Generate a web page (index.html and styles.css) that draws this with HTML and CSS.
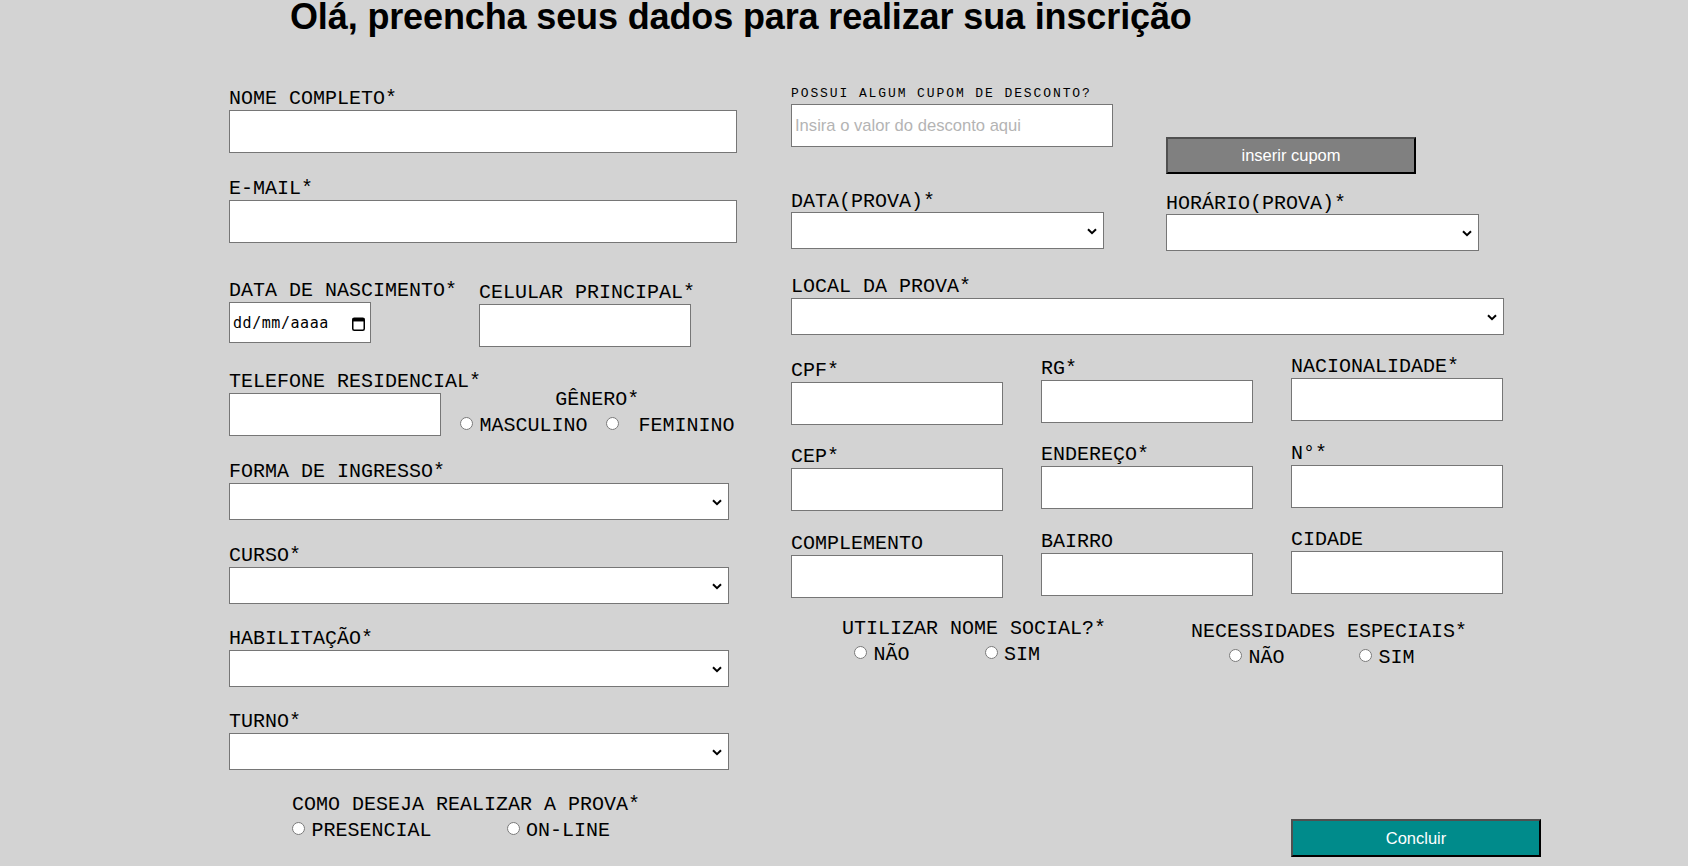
FILE: index.html
```html
<!DOCTYPE html>
<html lang="pt-BR">
<head>
<meta charset="utf-8">
<title>Inscrição</title>
<link rel="stylesheet" href="styles.css">
</head>
<body>
<h1 class="title">Olá, preencha seus dados para realizar sua inscrição</h1>
<form class="form">
  <div class="col-left">
    <div class="field">
      <label class="lbl">NOME COMPLETO*</label>
      <input class="txt w508" type="text">
    </div>
    <div class="field mt26">
      <label class="lbl">E-MAIL*</label>
      <input class="txt w508" type="text">
    </div>
    <div class="row r-birth">
      <div class="field">
        <label class="lbl">DATA DE NASCIMENTO*</label>
        <div class="date-box">
          <span class="date-text">dd/mm/aaaa</span>
          <svg class="cal" width="13" height="14" viewBox="0 0 13 14"><rect x="0.75" y="1.25" width="11.5" height="12" rx="1.5" fill="none" stroke="#000" stroke-width="1.5"/><rect x="0.75" y="1.25" width="11.5" height="3.2" fill="#000"/></svg>
        </div>
      </div>
      <div class="field mt2">
        <label class="lbl">CELULAR PRINCIPAL*</label>
        <input class="txt w212" type="text">
      </div>
    </div>
    <div class="row r-tel">
      <div class="field w212">
        <label class="lbl">TELEFONE RESIDENCIAL*</label>
        <input class="txt w212" type="text">
      </div>
      <div class="group g-genero">
        <span class="grp-lbl">GÊNERO*</span>
        <div class="options">
          <label class="opt"><input type="radio" name="genero">MASCULINO</label>
          <label class="opt o-fem"><input type="radio" name="genero"><span class="pad">FEMININO</span></label>
        </div>
      </div>
    </div>
    <div class="field mt26">
      <label class="lbl">FORMA DE INGRESSO*</label>
      <span class="sel-wrap"><select class="sel w500"><option></option></select><svg class="chev" width="10" height="7" viewBox="0 0 10 7"><path d="M1 1.2 L5 5.2 L9 1.2" fill="none" stroke="#000" stroke-width="2"/></svg></span>
    </div>
    <div class="field mt26">
      <label class="lbl">CURSO*</label>
      <span class="sel-wrap"><select class="sel w500"><option></option></select><svg class="chev" width="10" height="7" viewBox="0 0 10 7"><path d="M1 1.2 L5 5.2 L9 1.2" fill="none" stroke="#000" stroke-width="2"/></svg></span>
    </div>
    <div class="field mt25">
      <label class="lbl">HABILITAÇÃO*</label>
      <span class="sel-wrap"><select class="sel w500"><option></option></select><svg class="chev" width="10" height="7" viewBox="0 0 10 7"><path d="M1 1.2 L5 5.2 L9 1.2" fill="none" stroke="#000" stroke-width="2"/></svg></span>
    </div>
    <div class="field mt25">
      <label class="lbl">TURNO*</label>
      <span class="sel-wrap"><select class="sel w500"><option></option></select><svg class="chev" width="10" height="7" viewBox="0 0 10 7"><path d="M1 1.2 L5 5.2 L9 1.2" fill="none" stroke="#000" stroke-width="2"/></svg></span>
    </div>
    <div class="group g-como">
      <span class="grp-lbl">COMO DESEJA REALIZAR A PROVA*</span>
      <div class="options">
        <label class="opt"><input type="radio" name="modo">PRESENCIAL</label>
        <label class="opt o-online"><input type="radio" name="modo">ON-LINE</label>
      </div>
    </div>
  </div>

  <div class="col-right">
    <div class="row r-coupon">
      <div class="field">
        <label class="lbl-small">POSSUI ALGUM CUPOM DE DESCONTO?</label>
        <input class="txt w322" type="text" placeholder="Insira o valor do desconto aqui">
      </div>
      <button type="button" class="btn btn-cupom">inserir cupom</button>
    </div>
    <div class="row r-prova">
      <div class="field">
        <label class="lbl tight">DATA(PROVA)*</label>
        <span class="sel-wrap"><select class="sel w313"><option></option></select><svg class="chev" width="10" height="7" viewBox="0 0 10 7"><path d="M1 1.2 L5 5.2 L9 1.2" fill="none" stroke="#000" stroke-width="2"/></svg></span>
      </div>
      <div class="field f-hora">
        <label class="lbl tight">HORÁRIO(PROVA)*</label>
        <span class="sel-wrap"><select class="sel w313"><option></option></select><svg class="chev" width="10" height="7" viewBox="0 0 10 7"><path d="M1 1.2 L5 5.2 L9 1.2" fill="none" stroke="#000" stroke-width="2"/></svg></span>
      </div>
    </div>
    <div class="field f-local">
      <label class="lbl">LOCAL DA PROVA*</label>
      <span class="sel-wrap"><select class="sel w713"><option></option></select><svg class="chev" width="10" height="7" viewBox="0 0 10 7"><path d="M1 1.2 L5 5.2 L9 1.2" fill="none" stroke="#000" stroke-width="2"/></svg></span>
    </div>
    <div class="row trio r-a">
      <div class="field w212 mt4">
        <label class="lbl">CPF*</label>
        <input class="txt w212" type="text">
      </div>
      <div class="field w212 mt2">
        <label class="lbl">RG*</label>
        <input class="txt w212" type="text">
      </div>
      <div class="field w212">
        <label class="lbl">NACIONALIDADE*</label>
        <input class="txt w212" type="text">
      </div>
    </div>
    <div class="row trio r-b">
      <div class="field w212 mt3">
        <label class="lbl">CEP*</label>
        <input class="txt w212" type="text">
      </div>
      <div class="field w212 mt1">
        <label class="lbl">ENDEREÇO*</label>
        <input class="txt w212" type="text">
      </div>
      <div class="field w212">
        <label class="lbl">N°*</label>
        <input class="txt w212" type="text">
      </div>
    </div>
    <div class="row trio r-c">
      <div class="field w212 mt4">
        <label class="lbl">COMPLEMENTO</label>
        <input class="txt w212" type="text">
      </div>
      <div class="field w212 mt2">
        <label class="lbl">BAIRRO</label>
        <input class="txt w212" type="text">
      </div>
      <div class="field w212">
        <label class="lbl">CIDADE</label>
        <input class="txt w212" type="text">
      </div>
    </div>
    <div class="row r-radios">
      <div class="group g-social">
        <span class="grp-lbl">UTILIZAR NOME SOCIAL?*</span>
        <div class="options o-social">
          <label class="opt"><input type="radio" name="social">NÃO</label>
          <label class="opt o-sim"><input type="radio" name="social">SIM</label>
        </div>
      </div>
      <div class="group g-nec">
        <span class="grp-lbl">NECESSIDADES ESPECIAIS*</span>
        <div class="options o-nec">
          <label class="opt"><input type="radio" name="nec">NÃO</label>
          <label class="opt o-sim2"><input type="radio" name="nec">SIM</label>
        </div>
      </div>
    </div>
    <button type="submit" class="btn btn-concluir">Concluir</button>
  </div>
</form>
</body>
</html>
```

FILE: styles.css
```css
* { box-sizing: border-box; }

html, body { margin: 0; padding: 0; }

body {
  background: #d3d3d3;
  color: #000;
  font-family: "Liberation Mono", "Courier New", monospace;
  overflow: hidden;
}

.title {
  margin: 0;
  padding-left: 290px;
  font-family: "Liberation Sans", Arial, sans-serif;
  font-weight: bold;
  font-size: 36px;
  line-height: 34px;
  letter-spacing: -0.13px;
  white-space: nowrap;
}

.form {
  display: flex;
  align-items: flex-start;
  margin-top: 52px;
  padding-left: 229px;
}

.col-left {
  width: 508px;
  padding-top: 3px;
  display: flex;
  flex-direction: column;
}

.col-right {
  margin-left: 54px;
  width: 760px;
  display: flex;
  flex-direction: column;
  align-items: flex-start;
}

.row { display: flex; align-items: flex-start; }

.field { display: flex; flex-direction: column; align-items: flex-start; }

.lbl {
  display: block;
  font-size: 20px;
  line-height: 20px;
  height: 20px;
  margin-bottom: 1px;
  white-space: nowrap;
}
.lbl.tight { margin-bottom: 0; }

.lbl-small {
  display: block;
  font-size: 13px;
  line-height: 16px;
  height: 16px;
  letter-spacing: 1.9px;
  margin-bottom: 2px;
  white-space: nowrap;
}

.txt {
  display: block;
  height: 43px;
  margin: 0;
  padding: 0 3px;
  border: 1px solid #767676;
  border-radius: 0;
  background: #fff;
  font-family: "Liberation Sans", Arial, sans-serif;
  font-size: 16.6px;
  outline: none;
}
.txt::placeholder { color: #b4b4b4; }

.sel-wrap {
  position: relative;
  display: block;
}

.sel {
  display: block;
  height: 37px;
  margin: 0;
  padding: 0 3px;
  border: 1px solid #767676;
  border-radius: 0;
  background-color: #fff;
  font-family: "Liberation Sans", Arial, sans-serif;
  font-size: 16px;
  -webkit-appearance: none;
  appearance: none;
}

.chev {
  position: absolute;
  right: 7px;
  top: 50%;
  margin-top: -3px;
  pointer-events: none;
}

.w508 { width: 508px; }
.w500 { width: 500px; }
.w322 { width: 322px; }
.w313 { width: 313px; }
.w212 { width: 212px; }
.w713 { width: 713px; }

.mt1 { margin-top: 1px; }
.mt2 { margin-top: 2px; }
.mt3 { margin-top: 3px; }
.mt4 { margin-top: 4px; }
.mt25 { margin-top: 25px; }
.mt26 { margin-top: 26px; }

/* birth row */
.r-birth { margin-top: 38px; gap: 22px; }

.date-box {
  width: 142px;
  height: 41px;
  border: 1px solid #767676;
  background: #fff;
  display: flex;
  align-items: center;
  justify-content: space-between;
  padding: 0 5px 0 3px;
}
.date-text {
  font-family: "DejaVu Sans Mono", monospace;
  font-size: 15px;
  letter-spacing: 0.55px;
}
.cal { margin-top: 3px; }

/* telephone + gender */
.r-tel { margin-top: 25px; align-items: flex-end; }

.group { display: flex; flex-direction: column; }
.grp-lbl {
  display: block;
  font-size: 20px;
  line-height: 20px;
  height: 20px;
  margin-bottom: 6px;
  white-space: nowrap;
}

.options { display: flex; align-items: flex-start; height: 20px; }

.opt {
  display: flex;
  align-items: flex-start;
  font-size: 20px;
  line-height: 20px;
  white-space: nowrap;
}
.opt input {
  width: 13px;
  height: 13px;
  margin: 1px 6.5px 0 0;
  flex: none;
}

.g-genero { margin-left: 19px; align-items: center; }
.o-fem { margin-left: 18.5px; }
.pad { padding-left: 13px; }

.g-como { margin-top: 25px; margin-left: 63px; }
.o-online { margin-left: 75px; }

/* right column */
.btn {
  display: block;
  width: 250px;
  margin: 0;
  padding: 0;
  border-style: solid;
  border-width: 2px;
  border-color: #505050 #000 #000 #505050;
  color: #fff;
  font-family: "Liberation Sans", Arial, sans-serif;
  font-size: 16.5px;
  cursor: pointer;
}

.btn-cupom {
  height: 37px;
  margin-left: 53px;
  margin-top: 51px;
  background: #808080;
}

.r-prova { margin-top: 18px; }
.f-hora { margin-left: 62px; margin-top: 2px; }

.f-local { margin-top: 26px; }

.trio { gap: 38px; }
.r-a { margin-top: 22px; }
.r-b { margin-top: 19px; }
.r-c { margin-top: 19px; }

.r-radios { margin-top: 21px; }
.g-social { margin-left: 51px; }
.o-social { margin-left: 12px; }
.o-sim { margin-left: 75px; }
.g-nec { margin-left: 85px; margin-top: 3px; }
.o-nec { margin-left: 38px; }
.o-sim2 { margin-left: 74.5px; }

.btn-concluir {
  height: 38px;
  margin-top: 151px;
  margin-left: 500px;
  background: #008b8b;
}
```
